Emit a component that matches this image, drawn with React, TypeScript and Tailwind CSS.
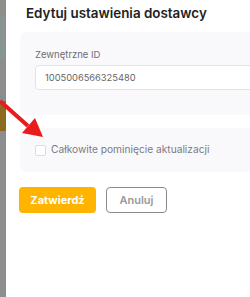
export default function App() {
  return (
    <div className="relative flex h-[297px] w-[250px] overflow-hidden bg-white" style={{ fontFamily: "Inter, 'Open Sans', sans-serif" }}>
      {/* dimmed page behind the modal */}
      <div className="flex w-[6px] shrink-0 flex-col">
        <div className="h-[15px] bg-[#8e8f8a]" />
        <div className="h-[45px] bg-[#879490]" />
        <div className="h-[41px] bg-[#8b8d8e]" />
        <div className="h-[30px] bg-[#8c6a20]" />
        <div className="flex-1 bg-[#8b8d8e]" />
      </div>

      <div className="flex min-w-0 flex-1 flex-col bg-white pl-[14px]">
        <h2 className="pl-[6px] pt-[4px] text-[13.4px] leading-[18px] font-semibold text-[#222]">
          Edytuj ustawienia dostawcy
        </h2>

        <div className="mt-[10px] h-[83px] w-[260px] shrink-0 rounded-md bg-[#f9f9fb] pl-[15px] pt-[17px]">
          <div className="text-[9.5px] leading-[12px] text-[#6c6c78]">Zewnętrzne ID</div>
          <div className="mt-[4px] flex h-[25px] items-center rounded border border-[#e3e3ec] bg-white pl-[9px] text-[9.3px] text-[#666]">
            1005006566325480
          </div>
        </div>

        <div className="mt-[13px] flex h-[44px] w-[260px] shrink-0 items-center gap-[5px] rounded-md bg-[#f9f9fb] pl-[15px]">
          <span className="h-[11px] w-[11px] rounded-[2px] border border-[#dcdce6] bg-white" />
          <span className="text-[10.2px] text-[#7a7a86]">Całkowite pominięcie aktualizacji</span>
        </div>

        <div className="-ml-[1px] mt-[15px] flex gap-[10px]">
          <button className="h-[26px] w-[77px] rounded bg-[#ffb400] text-[11px] font-bold text-white">
            Zatwierdź
          </button>
          <button className="h-[26px] w-[61px] rounded border border-[#8a8a8a] bg-white text-[11px] font-semibold text-[#999]">
            Anuluj
          </button>
        </div>
      </div>

      <svg className="absolute left-0 top-0" width="60" height="150" viewBox="0 0 60 150">
        <line x1="0" y1="101" x2="28" y2="126" stroke="#e81c1c" strokeWidth="4" />
        <polygon points="43,137 22,133 35,118" fill="#e81c1c" />
      </svg>
    </div>
  );
}
